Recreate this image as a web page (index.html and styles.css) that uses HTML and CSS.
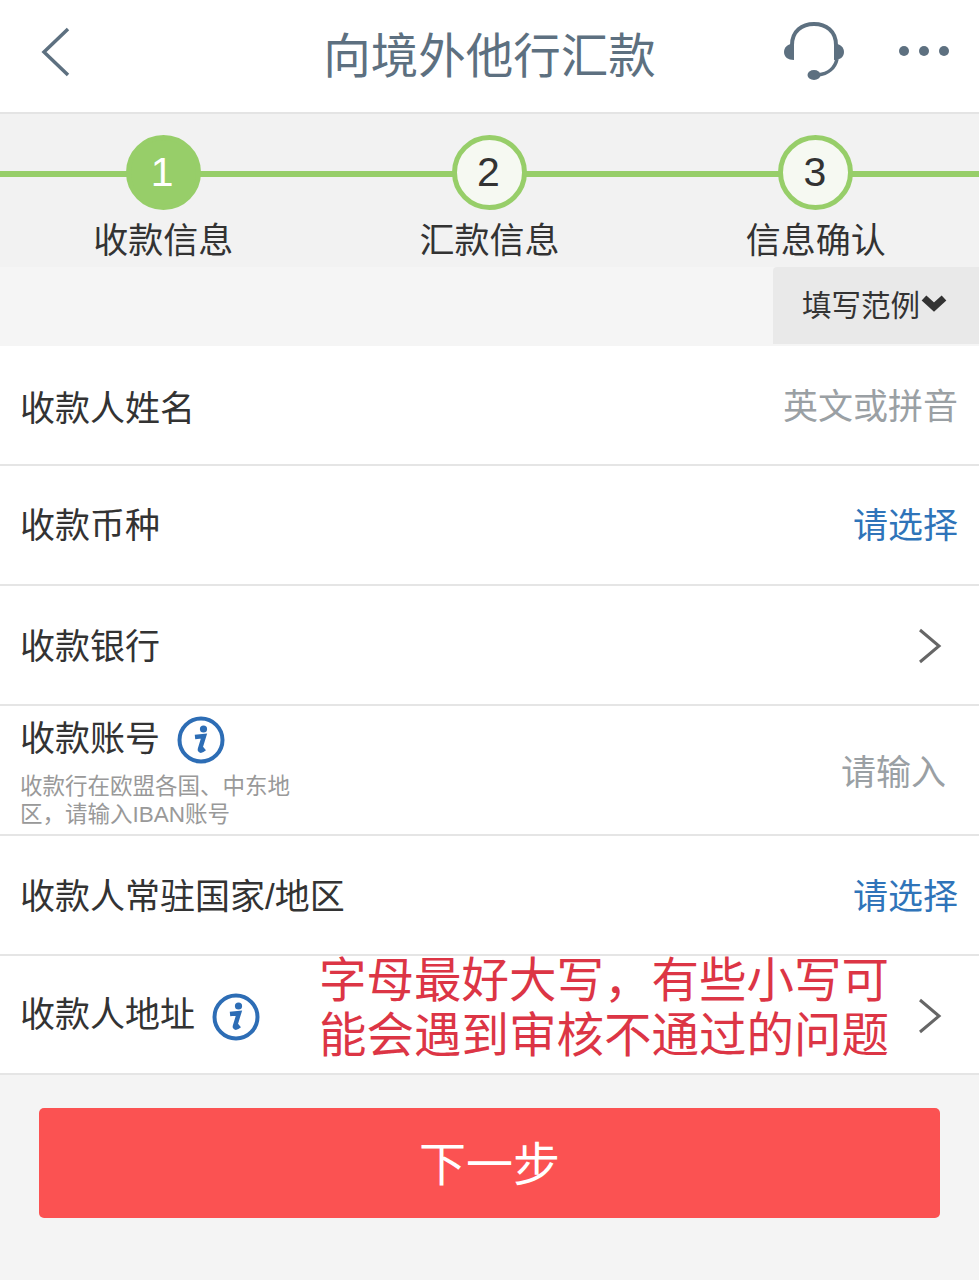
FILE: index.html
```html
<!DOCTYPE html>
<html lang="zh-CN">

<head>
    <meta charset="UTF-8">
    <meta name="viewport" content="width=device-width, initial-scale=1.0">
    <title>向境外他行汇款</title>
    <link rel="stylesheet" href="styles.css">
</head>

<body>
    <header class="topbar">
        <svg class="back" width="32" height="50" viewBox="0 0 32 50">
            <path d="M28 2 L4 25 L28 48" fill="none" stroke="#5d7080" stroke-width="3.5" />
        </svg>
        <h1>向境外他行汇款</h1>
        <div class="topbar-right">
            <svg class="headset" width="64" height="62" viewBox="0 0 64 62">
                <path d="M9 24 C9 10 19 3 31 3 C43 3 53 10 53 24" fill="none" stroke="#5d7080" stroke-width="4" />
                <path d="M11 22 V39 C5 39 1 36 1 31 C1 26 5 23 11 22 Z" fill="#5d7080" />
                <path d="M51 22 V39 C57 39 61 36 61 31 C61 26 57 23 51 22 Z" fill="#5d7080" />
                <path d="M54 38 C52 47 45 53 35 54" fill="none" stroke="#5d7080" stroke-width="3.5" />
                <ellipse cx="31" cy="54" rx="6.500" ry="5" fill="#5d7080" />
            </svg>
            <div class="more"><i></i><i></i><i></i></div>
        </div>
    </header>

    <section class="steps">
        <div class="step">
            <span class="dot active">1</span>
            <span class="step-name">收款信息</span>
        </div>
        <div class="step">
            <span class="dot">2</span>
            <span class="step-name">汇款信息</span>
        </div>
        <div class="step">
            <span class="dot">3</span>
            <span class="step-name">信息确认</span>
        </div>
    </section>

    <div class="sample-bar">
        <div class="sample-btn">填写范例
            <svg width="28" height="20" viewBox="0 0 28 20">
                <path d="M4 5 L14 14 L24 5" fill="none" stroke="#333" stroke-width="7" />
            </svg>
        </div>
    </div>

    <main class="form">
        <div class="row row-name">
            <span class="label">收款人姓名</span>
            <span class="hint">英文或拼音</span>
        </div>
        <div class="row row-currency">
            <span class="label">收款币种</span>
            <span class="link">请选择</span>
        </div>
        <div class="row">
            <span class="label">收款银行</span>
            <svg class="chevron" width="26" height="36" viewBox="0 0 26 36">
                <path d="M3 2 L22 18 L3 34" fill="none" stroke="#666" stroke-width="3" />
            </svg>
        </div>
        <div class="row row-account">
            <div class="account">
                <div class="label-line">
                    <span class="label">收款账号</span>
                    <svg class="info" width="48" height="48" viewBox="0 0 48 48">
                        <circle cx="24" cy="24" r="21.5" fill="none" stroke="#2d6db5" stroke-width="4" />
                        <circle cx="26.5" cy="13" r="3.6" fill="#2d6db5" />
                        <path d="M18 21 L27 20 L23 33 C22.5 35 24 35.5 27.5 32.500" fill="none" stroke="#2d6db5" stroke-width="4.500" />
                    </svg>
                </div>
                <p class="note">收款行在欧盟各国、中东地区，请输入IBAN账号</p>
            </div>
            <span class="hint hint-input">请输入</span>
        </div>
        <div class="row">
            <span class="label">收款人常驻国家/地区</span>
            <span class="link">请选择</span>
        </div>
        <div class="row row-address">
            <div class="label-line">
                <span class="label">收款人地址</span>
                <svg class="info" width="48" height="48" viewBox="0 0 48 48">
                    <circle cx="24" cy="24" r="21.5" fill="none" stroke="#2d6db5" stroke-width="4" />
                    <circle cx="26.5" cy="13" r="3.6" fill="#2d6db5" />
                    <path d="M18 21 L27 20 L23 33 C22.5 35 24 35.5 27.5 32.500" fill="none" stroke="#2d6db5" stroke-width="4.500" />
                </svg>
            </div>
            <svg class="chevron" width="26" height="36" viewBox="0 0 26 36">
                <path d="M3 2 L22 18 L3 34" fill="none" stroke="#666" stroke-width="3" />
            </svg>
            <p class="annotation">字母最好大写，有些小写可<br>能会遇到审核不通过的问题</p>
        </div>
    </main>

    <div class="actions">
        <button class="next">下一步</button>
    </div>
</body>

</html>
```

FILE: styles.css
```css
* {
    box-sizing: border-box;
}

body {
    font-family: "Liberation Sans", "Noto Sans CJK SC", sans-serif;
    margin: 0;
    padding: 0;
    width: 979px;
    height: 1280px;
    overflow: hidden;
    background-color: #f4f4f4;
    color: #333;
}

.topbar {
    height: 114px;
    background-color: #fff;
    border-bottom: 2px solid #e4e4e4;
    display: grid;
    grid-template-columns: 1fr auto 1fr;
    align-items: center;
    padding: 0 30px 8px;
}

.back {
    margin-left: 10px;
}

.topbar h1 {
    margin: 0;
    text-align: center;
    font-size: 47.5px;
    font-weight: 400;
    color: #5d7080;
}

.topbar-right {
    display: flex;
    justify-content: flex-end;
    align-items: center;
}

.headset {
    margin: 0 52px 0 0;
}

.more {
    display: flex;
    gap: 10px;
    margin-bottom: 2px;
}

.more i {
    width: 10px;
    height: 10px;
    border-radius: 50%;
    background-color: #5d7080;
}

.steps {
    position: relative;
    height: 153px;
    display: grid;
    grid-template-columns: repeat(3, 1fr);
    background-color: #f2f2f2;
    padding-top: 21px;
}

.steps::before {
    content: "";
    position: absolute;
    left: 0;
    right: 0;
    top: 57px;
    height: 6px;
    background-color: #97ce69;
}

.step {
    position: relative;
    display: flex;
    flex-direction: column;
    align-items: center;
}

.dot {
    width: 75px;
    height: 75px;
    border-radius: 50%;
    border: 5px solid #97ce69;
    background-color: #f6f9f2;
    display: flex;
    align-items: center;
    justify-content: center;
    font-size: 41px;
    padding-right: 2px;
}

.dot.active {
    background-color: #97ce69;
    color: #fff;
}

.step-name {
    margin-top: 6px;
    font-size: 35px;
    line-height: 50px;
}

.sample-bar {
    height: 79px;
    background-color: #f5f5f5;
    display: flex;
    justify-content: flex-end;
}

.sample-btn {
    width: 206px;
    height: 77px;
    background-color: #e9e9e9;
    border-radius: 4px 0 0 0;
    display: flex;
    align-items: center;
    padding: 0 0 6px 29px;
    font-size: 29.5px;
}

.form {
    background-color: #fff;
}

.row {
    position: relative;
    height: 120px;
    padding: 0 21px 4px 20px;
    border-bottom: 2px solid #e5e5e5;
    display: flex;
    align-items: center;
    justify-content: space-between;
}

.row-name {
    padding-bottom: 0;
}

.row-name .hint {
    margin-bottom: 4px;
}

.row-currency {
    padding-bottom: 5px;
}

.label {
    font-size: 35px;
}

.hint {
    font-size: 35px;
    color: #9aa0a4;
}

.link {
    font-size: 35px;
    color: #2f74b9;
}

.chevron {
    margin: 6px 15px 0 0;
}

.row-account {
    height: 130px;
    padding-bottom: 2px;
}

.account {
    width: 280px;
    align-self: flex-start;
}

.label-line {
    display: flex;
    align-items: center;
    gap: 17px;
}

.info {
    margin-top: 10px;
}

.note {
    margin: 9px 0 0;
    font-size: 22.5px;
    line-height: 28px;
    color: #999;
}

.hint-input {
    margin-right: 12px;
}

.row-address {
    height: 119px;
    padding-bottom: 6px;
}

.row-address .chevron {
    margin-top: 8px;
}

.annotation {
    position: absolute;
    left: 319px;
    top: -3px;
    margin: 0;
    font-size: 47.5px;
    line-height: 55px;
    color: #dc3545;
}

.actions {
    padding: 33px 39px 0 39px;
}

.next {
    display: block;
    width: 100%;
    height: 110px;
    border: 0;
    border-radius: 5px;
    background-color: #fb5252;
    color: #fff;
    font-family: inherit;
    font-size: 47px;
    padding-bottom: 6px;
}
```
